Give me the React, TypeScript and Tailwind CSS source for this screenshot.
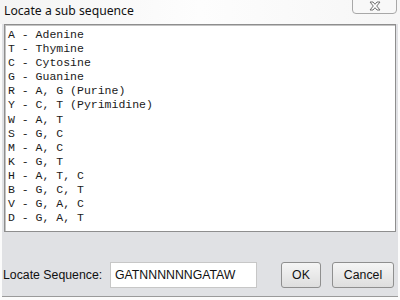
import React from "react";

const lines = [
  "A - Adenine",
  "T - Thymine",
  "C - Cytosine",
  "G - Guanine",
  "R - A, G (Purine)",
  "Y - C, T (Pyrimidine)",
  "W - A, T",
  "S - G, C",
  "M - A, C",
  "K - G, T",
  "H - A, T, C",
  "B - G, C, T",
  "V - G, A, C",
  "D - G, A, T",
];

export default function App() {
  return (
    <div className="w-[400px] h-[300px] overflow-hidden bg-[#fbfbfb] relative flex flex-col">
      {/* title bar */}
      <div className="h-[24px] flex items-start bg-gradient-to-r from-[#f4f4f4] via-[#fdfdfd] to-[#f6f6f6] relative">
        <span
          className="ml-[4px] mt-[2px] text-[12.2px] text-[#111]"
          style={{ fontFamily: '"Noto Sans", "Open Sans", sans-serif' }}
        >
          Locate a sub sequence
        </span>
        <div className="absolute left-[352px] top-[-2px] w-[45px] h-[16px] rounded-b-[4px] border border-[#a8a8a8] bg-[#f8f8f8] flex items-center justify-center">
          <svg width="12" height="10" viewBox="0 0 12 10">
            <path
              d="M1 1 L4 1 L6 3.3 L8 1 L11 1 L7.7 5 L11 9 L8 9 L6 6.7 L4 9 L1 9 L4.3 5 Z"
              fill="#ffffff"
              stroke="#707070"
              strokeWidth="1"
              strokeLinejoin="round"
            />
          </svg>
        </div>
      </div>
      {/* client area */}
      <div className="flex-1 mx-[2px] mb-[3px] bg-[#e0e1e4] border-b border-[#9a9a9a] flex flex-col">
        <div className="mx-[2px] h-[208px] border border-[#8e8e8e] shadow-[inset_1px_1px_0_#c4c4c4] bg-white pl-[3px] pt-[3px]">
          <div
            className="text-[11.5px] leading-[14.1px] text-[#1a1a1a] whitespace-pre"
            style={{ fontFamily: '"Liberation Mono", monospace' }}
          >
            {lines.map((l) => (
              <div key={l}>{l}</div>
            ))}
          </div>
        </div>
        <div
          className="flex items-center mt-[30px] h-[26px] text-[12.3px] text-[#111]"
          style={{ fontFamily: '"Liberation Sans", Arial, sans-serif' }}
        >
          <span className="ml-[1px] w-[107px]">Locate Sequence:</span>
          <div className="w-[147px] h-[26px] border border-[#c7c7c7] bg-white flex items-center pl-[4px]">
            GATNNNNNNGATAW
          </div>
          <button className="ml-[24px] w-[40px] h-[26px] rounded-[3px] border border-[#8f8f8f] bg-gradient-to-b from-[#f5f5f5] to-[#dedede] text-[12.3px]">
            OK
          </button>
          <button className="ml-[11px] w-[62px] h-[26px] rounded-[3px] border border-[#8f8f8f] bg-gradient-to-b from-[#f5f5f5] to-[#dedede] text-[12.3px]">
            Cancel
          </button>
        </div>
      </div>
    </div>
  );
}
